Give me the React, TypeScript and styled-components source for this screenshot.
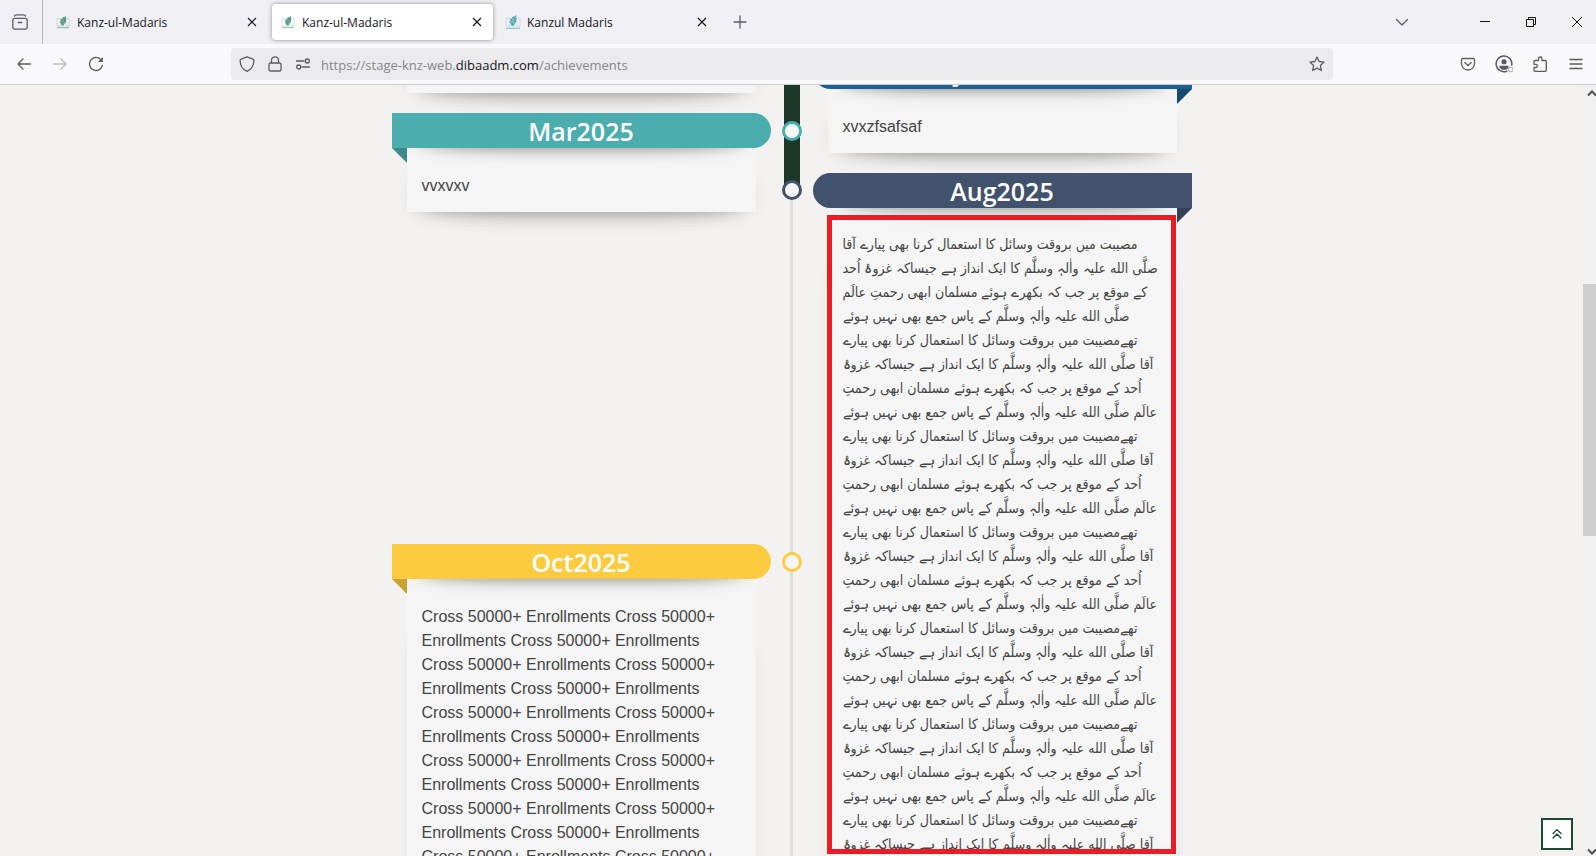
import React from "react";
import styled, { createGlobalStyle } from "styled-components";

const GlobalStyle = createGlobalStyle`
  *, *::before, *::after { box-sizing: border-box; }
  body {
    margin: 0;
    background: #f3f2f1;
    font-family: "Liberation Sans", Arial, sans-serif;
    color: #444;
    overflow: hidden;
  }
  button { font: inherit; color: inherit; background: none; border: 0; padding: 0; }
`;

const Window = styled.div`
  display: flex;
  flex-direction: column;
  height: 100vh;
`;

/* ---------- Browser chrome ---------- */

const TabStrip = styled.header`
  display: flex;
  align-items: center;
  flex: none;
  height: 44px;
  background: #f0f0f4;
  color: #15141a;
  font-family: "Open Sans", "Noto Sans", sans-serif;
  font-size: 12px;
`;

const IconButton = styled.button<{ $width?: number; $before?: number; $faded?: boolean }>`
  display: flex;
  align-items: center;
  justify-content: center;
  flex: none;
  width: ${(p) => p.$width ?? 36}px;
  height: 32px;
  margin-left: ${(p) => p.$before ?? 0}px;
  color: ${(p) => (p.$faded ? "#bdbdc2" : "#5b5b66")};
`;

const ViewSlot = styled.div`
  display: flex;
  align-items: center;
  align-self: stretch;
  width: 43px;
  padding-left: 2px;
  border-right: 1px solid #b9b9be;
`;

const Tabs = styled.nav`
  display: flex;
  gap: 4px;
  padding-left: 4px;
`;

const Tab = styled.div<{ $active?: boolean }>`
  display: flex;
  align-items: center;
  width: 221px;
  height: 36px;
  padding: 0 4px 0 8px;
  border-radius: 4px;
  background: ${(p) => (p.$active ? "#fff" : "transparent")};
  box-shadow: ${(p) => (p.$active ? "0 0 4px rgba(0, 0, 0, 0.4)" : "none")};
`;

const TabTitle = styled.button`
  display: flex;
  align-items: center;
  gap: 6px;
  flex: 1;
  text-align: left;
`;

const FaviconSlot = styled.span`
  display: flex;
  justify-content: center;
  width: 16px;
`;

const TabClose = styled.button`
  display: flex;
  align-items: center;
  justify-content: center;
  width: 24px;
  height: 24px;
`;

const WindowControls = styled.div`
  display: flex;
  margin-left: auto;
  align-items: center;
`;

const Toolbar = styled.div`
  display: flex;
  align-items: center;
  flex: none;
  height: 41px;
  padding: 0 2px 0 6px;
  background: #f9f9fb;
  border-bottom: 1px solid #ccccd1;
`;

const NavButtons = styled.div`
  display: flex;
  width: 225px;
`;

const AddressBar = styled.div`
  display: flex;
  align-items: center;
  flex: 1;
  height: 32px;
  padding: 0 0 0 2px;
  border-radius: 4px;
  background: #ebebed;
`;

const Address = styled.div`
  flex: 1;
  padding: 2px 0 0 4px;
  font-family: "Open Sans", "Noto Sans", sans-serif;
  font-size: 13px;
  line-height: 20px;
  color: #86868b;
  white-space: nowrap;
  strong { font-weight: 400; color: #15141a; }
`;

const ToolbarActions = styled.div`
  display: flex;
  padding-left: 117px;
`;

/* ---------- Page ---------- */

const Viewport = styled.div`
  display: flex;
  flex: 1;
  min-height: 0;
  overflow: hidden;
`;

const Page = styled.main`
  flex: 1;
  height: 100%;
  overflow: hidden;
`;

const Timeline = styled.div`
  display: grid;
  grid-template-columns: 1fr 42px 1fr;
  max-width: 800px;
  margin: -56px auto 0;
`;

const Column = styled.div<{ $offset?: number }>`
  display: flex;
  flex-direction: column;
  gap: 20px;
  padding-top: ${(p) => p.$offset ?? 0}px;
`;

const Spine = styled.div`
  position: relative;
  background: linear-gradient(#e0e0e0, #e0e0e0) center / 3px 100% no-repeat;
`;

const Progress = styled.div`
  width: 16px;
  height: 161px;
  margin: 0 auto;
  background: #1c3829;
`;

const Dot = styled.span<{ $color: string; $top: number }>`
  position: absolute;
  left: 11px;
  top: ${(p) => p.$top}px;
  width: 20px;
  height: 20px;
  border: 3px solid ${(p) => p.$color};
  border-radius: 50%;
  background: #f5f5f5;
`;

type Side = "left" | "right";

const Entry = styled.article<{ $gap?: number }>`
  margin-top: ${(p) => p.$gap ?? 0}px;
`;

const Banner = styled.h2<{ $side: Side; $color: string; $fold: string }>`
  position: relative;
  z-index: 2;
  height: 35px;
  margin: 0;
  border-radius: ${(p) => (p.$side === "left" ? "0 18px 18px 0" : "18px 0 0 18px")};
  background: ${(p) => p.$color};
  color: #fff;
  font-family: "Open Sans", "Noto Sans", sans-serif;
  font-size: 25px;
  font-weight: 600;
  line-height: 37px;
  text-align: center;

  &::after {
    content: "";
    position: absolute;
    top: 100%;
    ${(p) => p.$side}: 0;
    border-style: solid;
    border-color: ${(p) => p.$fold} transparent;
    border-width: ${(p) => (p.$side === "left" ? "15px 0 0 15px" : "15px 15px 0 0")};
  }
`;

const CardFrame = styled.div<{ $tall?: boolean }>`
  position: relative;
  isolation: isolate;
  margin: 0 15px;

  &::before {
    content: "";
    position: absolute;
    z-index: -1;
    top: ${(p) => (p.$tall ? "60px" : "50%")};
    bottom: 0;
    left: 12px;
    right: 12px;
    border-radius: 100px / 10px;
    box-shadow: 0 0 20px rgba(0, 0, 0, ${(p) => (p.$tall ? 0.25 : 0.5)});
  }
`;

const Card = styled.div<{ $padTop?: number }>`
  position: relative;
  min-height: 64px;
  padding: ${(p) => p.$padTop ?? 26}px 15px 14px;
  overflow: hidden;
  background: #f5f5f5;
  font-size: 16px;
  line-height: 24px;

  &::before {
    content: "";
    position: absolute;
    top: -20px;
    height: 20px;
    left: 10px;
    right: 10px;
    border-radius: 100px / 10px;
    box-shadow: 0 0 16px rgba(0, 0, 0, 0.5);
  }
`;

const PlainCard = styled(Card)`
  &::before { display: none; }
`;

const Text = styled.p`
  margin: 0;
`;

const UrduLine = styled.span`
  display: block;
  direction: rtl;
  text-align: left;
  white-space: nowrap;
  font-family: "DejaVu Sans Condensed", "DejaVu Sans", sans-serif;
  font-size: 14px;
  line-height: 24px;
`;

const Highlight = styled.div`
  position: absolute;
  top: 7px;
  left: -1px;
  right: 1px;
  height: 639px;
  border: 5px solid #ed1c24;
`;

const Scrollbar = styled.div`
  display: flex;
  flex-direction: column;
  align-items: flex-end;
  justify-content: space-between;
  flex: none;
  width: 13px;
  background: #f0f0f0;
  color: #505050;
`;

const Thumb = styled.div`
  width: 100%;
  height: 252px;
  margin: 182px 0 auto;
  background: #cdcdcd;
`;

const TopButton = styled.button`
  position: fixed;
  right: 23px;
  bottom: 6px;
  display: flex;
  align-items: center;
  justify-content: center;
  width: 32px;
  height: 32px;
  border: 2px solid #1c4a30;
  background: #fff;
  color: #1c4a30;
`;

/* ---------- Icons ---------- */

const Icon = ({ size = 16, w = 1.3, children }: { size?: number; w?: number; children: React.ReactNode }) => (
  <svg width={size} height={size} viewBox="0 0 16 16" fill="none" stroke="currentColor" strokeWidth={w} strokeLinecap="round" strokeLinejoin="round" aria-hidden="true">
    {children}
  </svg>
);

const Favicon = ({ color, size }: { color: string; size: number }) => (
  <svg width={size} height={size} viewBox="0 0 16 16" aria-hidden="true">
    <path d="M1 4h4v8H1zM11 4h4v8h-4z" fill="none" stroke={color} strokeOpacity=".25" />
    <path d="M8 2l1 1 2-2 .5 1.500-1 1.500 1.500.5-1 2 .5 1-1.500 2-1.500 2.500H6.500L6 10 4.500 8 5.500 6.500 5 4.500l1.500.5z" fill={color} />
    <path d="M7 5l2 1M6 8l3-1M8 10l2-2" stroke="#fff" strokeOpacity=".5" strokeWidth=".8" />
    <path d="M1 14.300h14" stroke={color} strokeOpacity=".55" strokeWidth="1.500" />
  </svg>
);

const CloseIcon = () => (
  <svg width="10" height="10" viewBox="0 0 10 10" fill="none" stroke="currentColor" aria-hidden="true">
    <path d="M1 1l8 8M9 1l-8 8" strokeWidth="1.100" />
  </svg>
);

/* ---------- Content ---------- */

const tabs = [
  { title: "Kanz-ul-Madaris", color: "#4f9276", size: 14 },
  { title: "Kanz-ul-Madaris", color: "#4f9276", size: 14, active: true },
  { title: "Kanzul Madaris", color: "#55a8b5", size: 16 },
];

const opening = [
  "مصیبت میں بروقت وسائل کا استعمال کرنا بھی پیارے آقا",
  "صلَّی الله علیہ واٰلہٖ وسلَّم کا ایک انداز ہے جیساکہ غزوۂ اُحد",
  "کے موقع پر جب کہ بکھرے ہوئے مسلمان ابھی رحمتِ عالَم",
  "صلَّی الله علیہ واٰلہٖ وسلَّم کے پاس جمع بھی نہیں ہوئے",
];

const refrain = [
  "تھےمصیبت میں بروقت وسائل کا استعمال کرنا بھی پیارے",
  "آقا صلَّی الله علیہ واٰلہٖ وسلَّم کا ایک انداز ہے جیساکہ غزوۂ",
  "اُحد کے موقع پر جب کہ بکھرے ہوئے مسلمان ابھی رحمتِ",
  "عالَم صلَّی الله علیہ واٰلہٖ وسلَّم کے پاس جمع بھی نہیں ہوئے",
];

const urduLines = [...opening, ...Array.from({ length: 6 }, () => refrain).flat()];
const enrollments = Array.from({ length: 20 }, () => "Cross 50000+ Enrollments").join(" ");

export default function App() {
  return (
    <Window>
      <GlobalStyle />
      <TabStrip>
        <ViewSlot>
          <IconButton aria-label="Recent browsing">
            <Icon size={16} w={1.3}>
              <path d="M2.500 2C2.700 1.200 3.200 .8 4 .8h8c.8 0 1.300.4 1.500 1.200M2.500 4.300h11A1.700 1.700 0 0 1 15.200 6v7.500a1.700 1.700 0 0 1-1.700 1.700h-11A1.700 1.700 0 0 1 .8 13.500V6a1.700 1.700 0 0 1 1.700-1.700zM6.300 8.500h3.400" />
            </Icon>
          </IconButton>
        </ViewSlot>
        <Tabs aria-label="Tabs">
          {tabs.map((t, i) => (
            <Tab key={i} $active={t.active}>
              <TabTitle>
                <FaviconSlot><Favicon color={t.color} size={t.size} /></FaviconSlot>
                {t.title}
              </TabTitle>
              <TabClose aria-label="Close tab"><CloseIcon /></TabClose>
            </Tab>
          ))}
        </Tabs>
        <IconButton aria-label="New tab" $width={44}>
          <Icon><path d="M8 2v12M2 8h12" /></Icon>
        </IconButton>
        <WindowControls>
          <IconButton aria-label="List all tabs" $width={60}>
            <Icon><path d="M2.500 5.500L8 11l5.500-5.500" /></Icon>
          </IconButton>
          <IconButton aria-label="Minimize" $width={46} $before={30}>
            <svg width="10" height="10" stroke="#111" aria-hidden="true"><path d="M0 4.500h10" /></svg>
          </IconButton>
          <IconButton aria-label="Restore" $width={46}>
            <svg width="10" height="10" stroke="#111" fill="none" aria-hidden="true"><path d="M.5 2.500h7v7h-7zM2.500 2.500v-2h7v7h-2" /></svg>
          </IconButton>
          <IconButton aria-label="Close window" $width={38} $before={4}>
            <svg width="10" height="10" stroke="#111" fill="none" aria-hidden="true"><path d="M0 0l10 10M10 0L0 10" /></svg>
          </IconButton>
        </WindowControls>
      </TabStrip>

      <Toolbar>
        <NavButtons>
          <IconButton aria-label="Back"><Icon><path d="M14.500 8H2M7 3L2 8l5 5" /></Icon></IconButton>
          <IconButton aria-label="Forward" $faded><Icon><path d="M1.500 8H14M9 3l5 5-5 5" /></Icon></IconButton>
          <IconButton aria-label="Reload">
            <Icon>
              <path d="M14.300 9.500A6.500 6.500 0 1 1 12.500 3.300" />
              <path d="M14.800 1v5h-5z" fill="currentColor" stroke="none" />
            </Icon>
          </IconButton>
        </NavButtons>
        <AddressBar>
          <IconButton aria-label="Tracking protection" $width={28}>
            <Icon><path d="M8 .8l6 2.300c.6.200.9.600.9 1.200 0 4.500-2 9-6.900 11C3.100 13.300 1.100 8.800 1.100 4.300c0-.6.300-1 .9-1.200z" /></Icon>
          </IconButton>
          <IconButton aria-label="Connection secure" $width={28}>
            <Icon><path d="M3.500 7h9A1.500 1.500 0 0 1 14 8.500v5a1.500 1.500 0 0 1-1.500 1.500h-9A1.500 1.500 0 0 1 2 13.500v-5A1.500 1.500 0 0 1 3.500 7zM4.500 7V4.300a3.500 3.500 0 0 1 7 0V7" /></Icon>
          </IconButton>
          <IconButton aria-label="Permissions" $width={28}>
            <Icon><path d="M1.500 5H9M7 11h7.500" /><circle cx="12.300" cy="5" r="2" /><circle cx="3.700" cy="11" r="2" /></Icon>
          </IconButton>
          <Address role="textbox" aria-label="Address">
            https://stage-knz-web.<strong>dibaadm.com</strong>/achievements
          </Address>
          <IconButton aria-label="Bookmark this page" $width={32}>
            <Icon><path d="M8 1l2.100 4.500 4.900.6-3.600 3.400.9 5L8 12.100l-4.300 2.400.9-5L1 6.100l4.900-.6z" /></Icon>
          </IconButton>
        </AddressBar>
        <ToolbarActions>
          <IconButton aria-label="Save to Pocket">
            <Icon><path d="M2.700 2.500h10.600A1.300 1.300 0 0 1 14.500 3.800v3.700a6.500 6.500 0 0 1-13 0V3.800a1.300 1.300 0 0 1 1.200-1.300zM4.800 6.500L8 9.500l3.200-3" /></Icon>
          </IconButton>
          <IconButton aria-label="Account">
            <Icon size={18}>
              <path d="M10.500 14.400A7 7 0 1 1 14.900 9" />
              <circle cx="8" cy="6" r="2.300" fill="currentColor" stroke="none" />
              <path d="M4 9.500h8v1.500l-2 2H6l-2-2z" fill="currentColor" stroke="none" />
              <circle cx="14" cy="12.800" r="2" stroke="#b5b5ba" strokeWidth="1" />
            </Icon>
          </IconButton>
          <IconButton aria-label="Extensions">
            <Icon><path d="M3 4.500h3.500V2.700a1.700 1.700 0 0 1 3.400 0v1.800h3.400a1 1 0 0 1 1 1v8.800a1 1 0 0 1-1 1H3a1 1 0 0 1-1-1v-2.800h1.700a1.600 1.600 0 0 0 0-3.200H2V5.500a1 1 0 0 1 1-1z" /></Icon>
          </IconButton>
          <IconButton aria-label="Menu"><Icon><path d="M2 3.500h12M2 8h12M2 12.500h12" /></Icon></IconButton>
        </ToolbarActions>
      </Toolbar>

      <Viewport>
        <Page>
          <Timeline>
            <Column>
              <CardFrame><PlainCard /></CardFrame>
              <Entry>
                <Banner $side="left" $color="#4badad" $fold="#3c8a8a">Mar2025</Banner>
                <CardFrame><Card><Text>vvxvxv</Text></Card></CardFrame>
              </Entry>
              <Entry $gap={312}>
                <Banner $side="left" $color="#fccb3f" $fold="#caa232">Oct2025</Banner>
                <CardFrame $tall><Card><Text>{enrollments}</Text></Card></CardFrame>
              </Entry>
            </Column>
            <Spine>
              <Progress />
              <Dot $color="#4badad" $top={92} />
              <Dot $color="#42516c" $top={151} />
              <Dot $color="#fccb3f" $top={523} />
            </Spine>
            <Column $offset={25}>
              <Entry>
                <Banner $side="right" $color="#1a5f8f" $fold="#154c72">Jan2025</Banner>
                <CardFrame><Card><Text>xvxzfsafsaf</Text></Card></CardFrame>
              </Entry>
              <Entry>
                <Banner $side="right" $color="#42516c" $fold="#354156">Aug2025</Banner>
                <CardFrame $tall>
                  <Card $padTop={24}>
                    <Text lang="ur">
                      {urduLines.map((line, i) => <UrduLine key={i}>{line}</UrduLine>)}
                    </Text>
                  </Card>
                  <Highlight />
                </CardFrame>
              </Entry>
            </Column>
          </Timeline>
        </Page>
        <Scrollbar aria-hidden="true">
          <svg width="12" height="17" viewBox="0 0 12 17" fill="none" stroke="currentColor" strokeWidth="2"><path d="M4 10.500l4-4 4 4" /></svg>
          <Thumb />
          <svg width="12" height="17" viewBox="0 0 12 17" fill="none" stroke="currentColor" strokeWidth="2"><path d="M4 10.500l4 4 4-4" /></svg>
        </Scrollbar>
      </Viewport>
      <TopButton aria-label="Back to top">
        <Icon size={14} w={1.6}><path d="M3.500 7.500L8 3l4.500 4.500M3.500 12.500L8 8l4.500 4.500" /></Icon>
      </TopButton>
    </Window>
  );
}
